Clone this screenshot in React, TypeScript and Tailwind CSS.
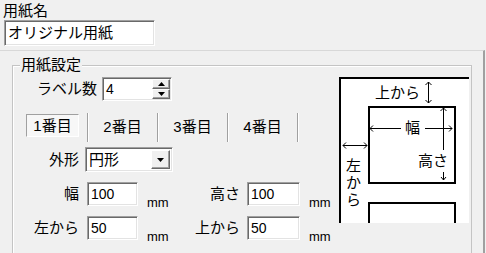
const sunken =
  "bg-white border border-t-[#a0a0a0] border-l-[#a0a0a0] border-b-white border-r-white shadow-[inset_1px_1px_0_#696969,inset_-1px_-1px_0_#e3e3e3]";
const raised =
  "bg-[#f0f0f0] border border-t-white border-l-white border-r-[#696969] border-b-[#696969] shadow-[inset_-1px_-1px_0_#a0a0a0]";

const Tri = ({ down }: { down?: boolean }) => (
  <svg width="7" height="4" viewBox="0 0 7 4">
    <path d={down ? "M0 0H7L3.5 4Z" : "M0 4H7L3.5 0Z"} fill="black" />
  </svg>
);

const Field = ({ label, value, labelW, gap, inputW }: { label: string; value: string; labelW: string; gap: string; inputW: string }) => (
  <>
    <span className={`${labelW} text-right leading-[18px]`}>{label}</span>
    <div className={`${gap} ${inputW} h-[24px] ${sunken} pl-[3px] text-[14px] leading-[22px]`}>{value}</div>
    <span className="ml-[9px] w-[24px] self-end mb-[-3px] text-[13px] leading-[12px] font-['Liberation_Sans',sans-serif]">mm</span>
  </>
);

// layout picture: lines in svg, labels placed on top
const Diagram = () => (
  <div className="relative w-[130px] h-[146px] bg-white leading-[16px] text-black">
    <svg width="130" height="146" viewBox="0 0 130 146" className="block">
      <g stroke="#000" strokeWidth="2" fill="none">
        <path d="M0 1H130M1 0V146" />
        <rect x="30" y="30" width="86" height="76" />
        <path d="M30 146V126H116V146" />
      </g>
      <g stroke="#000" strokeWidth="1" fill="none">
        <path d="M89.5 5V26M86.5 8L89.5 5L92.5 8M86.5 23L89.5 26L92.5 23" />
        <path d="M31 51.5H62M86 51.5H113M34 48.5L31 51.5L34 54.5M110 48.5L113 51.5L110 54.5" />
        <path d="M104.5 31V73M101.5 34L104.5 31L107.5 34" />
        <path d="M104.5 95V103M102 100L104.5 103L107 100" />
        <path d="M4 68.5H28M7 65.5L4 68.5L7 71.5M25 65.5L28 68.5L25 71.5" />
      </g>
    </svg>
    <span className="absolute left-[36px] top-[8px]">上から</span>
    <span className="absolute left-[66px] top-[43px]">幅</span>
    <span className="absolute left-[79px] top-[76px]">高さ</span>
    <span className="absolute left-[7px] top-[80px] flex flex-col leading-[17px]">
      <span>左</span>
      <span>か</span>
      <span>ら</span>
    </span>
  </div>
);

const tabs = ["1番目", "2番目", "3番目", "4番目"];

export default function App() {
  return (
    <div className="w-[486px] h-[253px] overflow-hidden bg-[#f0f0f0] text-black text-[15px] font-['Liberation_Sans','Noto_Sans_CJK_JP',sans-serif]">
      <div className="pl-[3px] pt-[3px]">
        <div className="leading-[16px]">用紙名</div>
        <div className={`mt-[1px] ml-[1px] w-[151px] h-[26px] ${sunken} pl-[3px] leading-[24px]`}>オリジナル用紙</div>
      </div>

      <div className="mt-[4px] w-[485px] h-[300px] border-t border-t-[#d8d8d8] border-r-2 border-r-[#a0a0a0] pt-[14px] pl-[12px]">
        <div className="relative w-[460px] h-[260px] border border-[#c4c4c4] shadow-[inset_1px_1px_0_#fff]">
          <span className="absolute left-[7px] -top-[10px] px-[1px] bg-[#f0f0f0] leading-[18px]">用紙設定</span>

          <div className="flex">
            <div className="w-[326px] flex flex-col">
              <div className="mt-[10px] flex items-center h-[25px]">
                <span className="w-[84px] text-right leading-[18px]">ラベル数</span>
                <div className={`ml-[5px] w-[70px] h-[24px] ${sunken} flex pl-[3px] pr-[1px] py-[1px]`}>
                  <span className="flex-1 text-[14px] leading-[20px]">4</span>
                  <div className="flex flex-col w-[18px]">
                    <div className={`flex-1 flex items-center justify-center ${raised}`}><Tri /></div>
                    <div className={`flex-1 flex items-center justify-center ${raised}`}><Tri down /></div>
                  </div>
                </div>
              </div>

              <div className="mt-[12px] ml-[5px] flex h-[29px]">
                {tabs.map((t, i) => (
                  <div key={t} className="w-[70px] flex items-center justify-center border-r border-r-[#a0a0a0] shadow-[1px_0_0_#fff]">
                    {i === 0 ? (
                      <div className="w-[53px] h-[23px] flex items-center justify-center border border-t-[#a0a0a0] border-l-[#a0a0a0] border-b-white border-r-white bg-[#f7f7f7] leading-[18px] -mt-[4px]">{t}</div>
                    ) : (
                      <span className="leading-[18px] -mt-[2px]">{t}</span>
                    )}
                  </div>
                ))}
              </div>

              <div className="mt-[5px] flex items-center h-[25px]">
                <span className="w-[66px] text-right leading-[18px]">外形</span>
                <div className={`ml-[6px] w-[88px] h-[25px] ${sunken} flex pl-[3px] p-[2px]`}>
                  <span className="flex-1 leading-[19px]">円形</span>
                  <div className={`w-[19px] flex items-center justify-center ${raised}`}><Tri down /></div>
                </div>
              </div>

              <div className="mt-[10px] flex items-center h-[24px]">
                <Field label="幅" value="100" labelW="w-[66px]" gap="ml-[8px]" inputW="w-[51px]" />
                <Field label="高さ" value="100" labelW="w-[69px]" gap="ml-[7px]" inputW="w-[53px]" />
              </div>

              <div className="mt-[10px] flex items-center h-[24px]">
                <Field label="左から" value="50" labelW="w-[66px]" gap="ml-[8px]" inputW="w-[51px]" />
                <Field label="上から" value="50" labelW="w-[69px]" gap="ml-[7px]" inputW="w-[53px]" />
              </div>
            </div>

            <div className="mt-[11px]">
              <Diagram />
            </div>
          </div>
        </div>
      </div>
    </div>
  );
}
